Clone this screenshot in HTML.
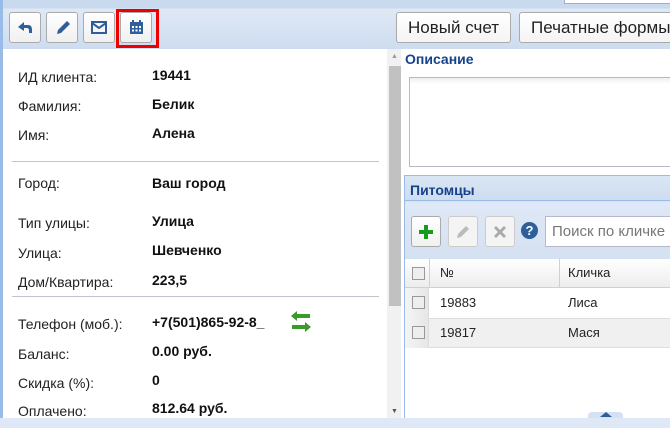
<!DOCTYPE html>
<html><head><meta charset="utf-8"><style>
*{box-sizing:border-box;margin:0;padding:0}
body{width:670px;height:428px;overflow:hidden;background:#dfe8f6;font-family:"Liberation Sans",Arial,sans-serif;position:relative}
.a{position:absolute}
.tb{left:0;top:0;width:670px;height:49px;background:linear-gradient(#c9d9ee 0,#c9d9ee 8px,#dfe9f5 9px,#cddcf0);border-left:3px solid #99bbe8}
.btn{position:absolute;top:12px;width:32px;height:31px;background:linear-gradient(#fff,#f0f0f0);border:1px solid #aaa;border-radius:3px}
.tbtn{position:absolute;top:12px;height:31px;background:linear-gradient(#fff,#f4f4f4);border:1px solid #aaa;border-radius:3px;font-size:17px;color:#222;padding:5px 11px;white-space:nowrap}
.lp{left:3px;top:49px;width:384px;height:369px;background:#fff}
.l{position:absolute;left:18px;font-size:14px;color:#222}
.v{position:absolute;left:152px;font-size:14px;font-weight:bold;color:#111}
.hr{position:absolute;left:12px;width:367px;height:1px;background:#c0c4cc}
</style></head><body>
<div class="a tb"></div>
<div class="a" style="left:564px;top:0;width:110px;height:4px;background:#fff;border:1px solid #aac;border-top:0"></div>
<div class="btn" style="left:9px"><svg width="30" height="29" viewBox="0 0 30 29"><path d="M8 14l6-5v3h4c3 0 4 2 4 5v3h-3v-3c0-1-1-2-2-2h-3v3z" fill="#2f5f9a"/></svg></div>
<div class="btn" style="left:46px"><svg width="30" height="29" viewBox="0 0 30 29"><path d="M10 21l1-4 9-9 3 3-9 9z" fill="#2f5f9a"/></svg></div>
<div class="btn" style="left:83px"><svg width="30" height="29" viewBox="0 0 30 29"><rect x="8" y="9" width="14" height="11" fill="none" stroke="#2f5f9a" stroke-width="2"/><path d="M8 10l7 5 7-5" fill="none" stroke="#2f5f9a" stroke-width="2"/></svg></div>
<div class="a" style="left:116px;top:9px;width:43px;height:39px;border:3px solid #e00"></div>
<div class="btn" style="left:120px"><svg width="30" height="29" viewBox="0 0 30 29"><rect x="9" y="9" width="13" height="12" fill="#2f5f9a"/><rect x="11" y="7" width="2" height="3" fill="#2f5f9a"/><rect x="18" y="7" width="2" height="3" fill="#2f5f9a"/><g fill="#fff"><rect x="11" y="13" width="2" height="2"/><rect x="14.5" y="13" width="2" height="2"/><rect x="18" y="13" width="2" height="2"/><rect x="11" y="16.5" width="2" height="2"/><rect x="14.5" y="16.5" width="2" height="2"/><rect x="18" y="16.5" width="2" height="2"/></g></svg></div>
<div class="tbtn" style="left:396px">Новый счет</div>
<div class="tbtn" style="left:519px;width:160px">Печатные формы</div>
<div class="a lp"></div>
<div class="l" style="top:69px">ИД клиента:</div><div class="v" style="top:67px">19441</div>
<div class="l" style="top:98px">Фамилия:</div><div class="v" style="top:96px">Белик</div>
<div class="l" style="top:127px">Имя:</div><div class="v" style="top:125px">Алена</div>
<div class="hr" style="top:161px"></div>
<div class="l" style="top:175px">Город:</div><div class="v" style="top:175px">Ваш город</div>
<div class="l" style="top:215px">Тип улицы:</div><div class="v" style="top:213px">Улица</div>
<div class="l" style="top:245px">Улица:</div><div class="v" style="top:242px">Шевченко</div>
<div class="l" style="top:274px">Дом/Квартира:</div><div class="v" style="top:272px">223,5</div>
<div class="hr" style="top:296px"></div>
<div class="l" style="top:316px">Телефон (моб.):</div><div class="v" style="top:314px">+7(501)865-92-8_</div>
<svg class="a" style="left:290px;top:310px" width="22" height="24" viewBox="0 0 22 24"><path d="M1 6l6-5v3h13v4H7v3z M21 17l-6-5v3H2v4h13v3z" fill="#3a9a2a"/></svg>
<div class="l" style="top:346px">Баланс:</div><div class="v" style="top:343px">0.00 руб.</div>
<div class="l" style="top:375px">Скидка (%):</div><div class="v" style="top:372px">0</div>
<div class="l" style="top:403px">Оплачено:</div><div class="v" style="top:400px">812.64 руб.</div>
<div class="a" style="left:387px;top:49px;width:14px;height:369px;background:#f1f1f1"></div>
<div class="a" style="left:389px;top:66px;width:12px;height:240px;background:#c1c1c1"></div>
<div class="a" style="left:391px;top:53px;font-size:7px;color:#999">▲</div>
<div class="a" style="left:391px;top:408px;font-size:7px;color:#555">▼</div>
<div class="a" style="left:401px;top:49px;width:269px;height:369px;background:#fff"></div>
<div class="a" style="left:405px;top:51px;font-size:14px;font-weight:bold;color:#15428b">Описание</div>
<div class="a" style="left:409px;top:77px;width:270px;height:90px;border:1px solid #b5b8c8;background:linear-gradient(#eee,#fff 6px)"></div>
<div class="a" style="left:404px;top:175px;width:270px;height:245px;border:1px solid #99bbe8;background:#fff"></div>
<div class="a" style="left:405px;top:176px;width:270px;height:84px;background:linear-gradient(#dae6f4,#cddcef 25px,#dfe8f6 26px,#d4e1f2)"></div>
<div class="a" style="left:410px;top:182px;font-size:14px;font-weight:bold;color:#15428b">Питомцы</div>
<div class="a" style="left:405px;top:200px;width:270px;height:1px;background:#99bbe8"></div>
<div class="btn" style="left:411px;top:216px;width:30px;height:31px"><svg width="28" height="29" viewBox="0 0 28 29"><path d="M12 8h4v5h5v4h-5v5h-4v-5H7v-4h5z" fill="#1a9a1a"/></svg></div>
<div class="btn" style="left:448px;top:216px;width:30px;height:31px;border-color:#ccc;background:#f4f4f4"><svg width="28" height="29" viewBox="0 0 28 29"><path d="M8 21l1-4 8-8 3 3-8 8z" fill="#bbb"/></svg></div>
<div class="btn" style="left:485px;top:216px;width:30px;height:31px;border-color:#ccc;background:#f4f4f4"><svg width="28" height="29" viewBox="0 0 28 29"><path d="M9 10l10 10M19 10L9 20" stroke="#aaa" stroke-width="3"/></svg></div>
<div class="a" style="left:521px;top:222px;width:17px;height:17px;border-radius:50%;background:#2f5f9a;color:#fff;font-size:13px;font-weight:bold;text-align:center;line-height:17px">?</div>
<div class="a" style="left:545px;top:216px;width:130px;height:31px;border:1px solid #b5b8c8;background:#fff;font-size:15px;color:#777;padding:6px 6px;white-space:nowrap">Поиск по кличке</div>
<div class="a" style="left:405px;top:259px;width:270px;height:29px;background:linear-gradient(#fff,#ededed);border-bottom:1px solid #d0d0d0"></div>
<div class="a" style="left:429px;top:259px;width:1px;height:29px;background:#d0d0d0"></div>
<div class="a" style="left:559px;top:259px;width:1px;height:29px;background:#d0d0d0"></div>
<div class="a" style="left:405px;top:318px;width:270px;height:30px;background:#f0f0f0;border-top:1px solid #ddd;border-bottom:1px solid #ddd"></div>
<div class="a" style="left:405px;top:288px;width:24px;height:60px;background:linear-gradient(90deg,#f5f5f5,#e6e6e6);border-right:1px solid #ddd"></div>
<div class="a" style="left:412px;top:267px;width:13px;height:13px;border:1px solid #999;background:#eee"></div>
<div class="a" style="left:412px;top:296px;width:13px;height:13px;border:1px solid #999;background:#eee"></div>
<div class="a" style="left:412px;top:326px;width:13px;height:13px;border:1px solid #999;background:#eee"></div>
<div class="a" style="left:440px;top:265px;font-size:13px;color:#222">№</div>
<div class="a" style="left:568px;top:265px;font-size:13px;color:#222">Кличка</div>
<div class="a" style="left:440px;top:295px;font-size:13px;color:#222">19883</div>
<div class="a" style="left:568px;top:295px;font-size:13px;color:#222">Лиса</div>
<div class="a" style="left:440px;top:325px;font-size:13px;color:#222">19817</div>
<div class="a" style="left:568px;top:325px;font-size:13px;color:#222">Мася</div>
<div class="a" style="left:588px;top:412px;width:35px;height:8px;background:#d4e1f2;border-radius:4px 4px 0 0"></div>
<div class="a" style="left:600px;top:412px;width:0;height:0;border-left:6px solid transparent;border-right:6px solid transparent;border-bottom:5px solid #2f5f9a"></div>
<div class="a" style="left:0;top:418px;width:670px;height:10px;background:#dfe8f6"></div>
<div class="a" style="left:0;top:49px;width:3px;height:369px;background:#99bbe8"></div>
</body></html>
